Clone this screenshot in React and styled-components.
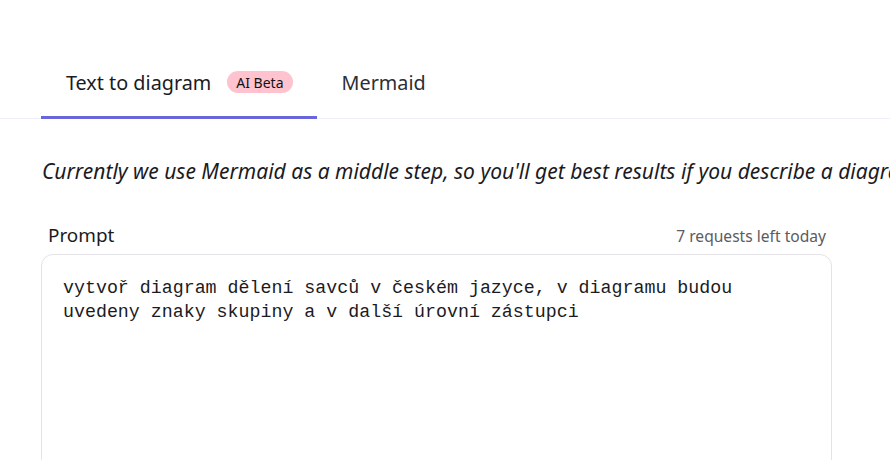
import styled, { createGlobalStyle } from 'styled-components';

const GlobalStyle = createGlobalStyle`
    body {
        margin: 0;
        background: #ffffff;
        font-family: "Noto Sans", "Open Sans", sans-serif;
        color: #1b1b1f;
        overflow: hidden;
    }
`;

const Page = styled.div`
    width: 890px;
    height: 460px;
    overflow: hidden;
`;

const TabList = styled.div`
    display: flex;
    margin-top: 48px;
    padding-left: 41px;
    border-bottom: 1px solid #f0effb;
`;

const Tab = styled.div`
    display: flex;
    align-items: center;
    gap: 16px;
    height: 68px;
    padding: 0 24px 0 25px;
    font-size: 19.8px;
    color: ${(p) => (p.$active ? '#1b1b1f' : '#2e2e33')};
    border-bottom: 3px solid ${(p) => (p.$active ? '#6965db' : 'transparent')};
    margin-bottom: -1px;
`;

const Badge = styled.span`
    display: inline-flex;
    align-items: center;
    height: 22px;
    padding: 0 9px;
    border-radius: 11px;
    background: #ffc2cf;
    font-size: 14px;
    color: #121215;
`;

const Body = styled.div`
    padding-left: 41px;
`;

const Intro = styled.p`
    margin: 38px 0 0 1px;
    font-size: 21px;
    font-style: italic;
    white-space: nowrap;
    color: #1b1b1f;
`;

const FieldHeader = styled.div`
    display: flex;
    justify-content: space-between;
    align-items: baseline;
    width: 778px;
    margin-top: 37px;
    padding-left: 7px;
`;

const Label = styled.span`
    font-size: 18.9px;
    color: #1b1b1f;
`;

const Quota = styled.span`
    font-size: 15.6px;
    color: #5b5b60;
`;

const PromptBox = styled.div`
    box-sizing: border-box;
    width: 791px;
    height: 240px;
    margin-top: 6px;
    padding: 21px 21px;
    border: 1px solid #e3e3e8;
    border-radius: 12px;
    font-family: "Liberation Mono", "DejaVu Sans Mono", monospace;
    font-size: 18.3px;
    line-height: 24px;
    color: #1b1b1f;
    white-space: pre-wrap;
`;

export default function App() {
    return (
        <Page>
            <GlobalStyle />
            <TabList>
                <Tab $active>
                    Text to diagram
                    <Badge>AI Beta</Badge>
                </Tab>
                <Tab>Mermaid</Tab>
            </TabList>
            <Body>
                <Intro>
                    Currently we use Mermaid as a middle step, so you'll get best results if you describe a diagram, sequence, flow chart or similar.
                </Intro>
                <FieldHeader>
                    <Label>Prompt</Label>
                    <Quota>7 requests left today</Quota>
                </FieldHeader>
                <PromptBox>
                    {'vytvoř diagram dělení savců v českém jazyce, v diagramu budou\nuvedeny znaky skupiny a v další úrovní zástupci'}
                </PromptBox>
            </Body>
        </Page>
    );
}
